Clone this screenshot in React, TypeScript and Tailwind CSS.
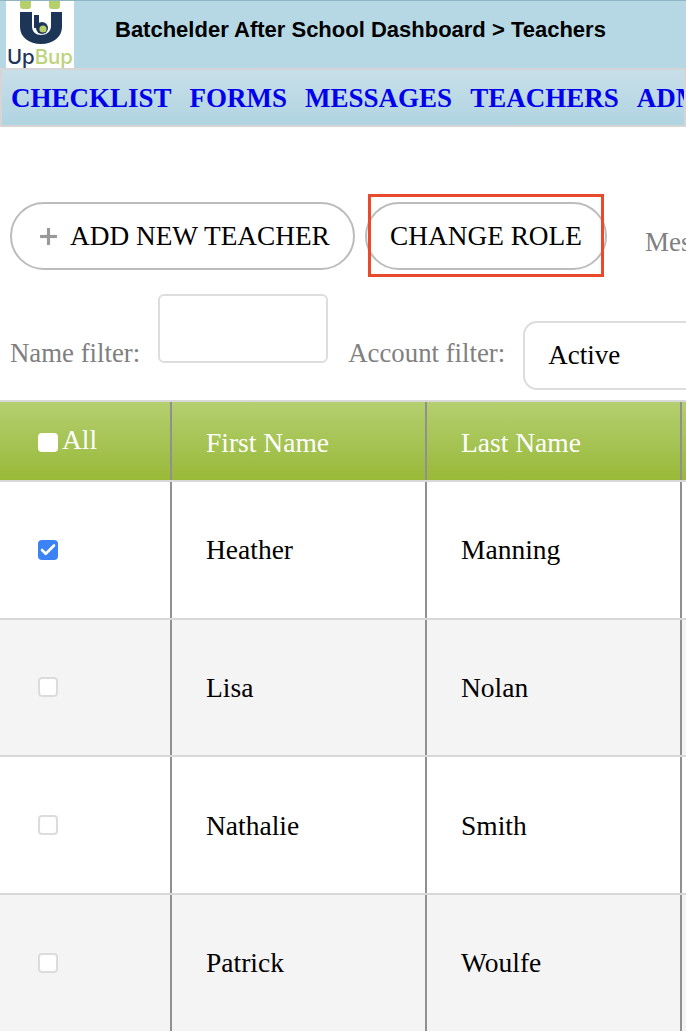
import { Check, Plus } from "lucide-react";

const NAV_ITEMS = ["CHECKLIST", "FORMS", "MESSAGES", "TEACHERS", "ADMIN"];

const TEACHERS = [
  { first: "Heather", last: "Manning", checked: true },
  { first: "Lisa", last: "Nolan", checked: false },
  { first: "Nathalie", last: "Smith", checked: false },
  { first: "Patrick", last: "Woulfe", checked: false },
];

function Logo() {
  return (
    <svg width="68" height="67" viewBox="0 0 68 67" className="block shrink-0 bg-white">
      <path d="M14 0h11v5q0 3-3 3h-5q-3 0-3-3z" fill="#b5cf6b" />
      <path d="M43 0h11v5q0 3-3 3h-5q-3 0-3-3z" fill="#b5cf6b" />
      <path d="M14 11h12v14c0 6 4 9 9 9s10-3 10-9V11h11v15c0 10-9 17-21 17S14 36 14 26z" fill="#1d3557" />
      <rect x="28" y="14" width="5" height="13" fill="#1d3557" />
      <circle cx="36" cy="27" r="6" fill="#1d3557" />
      <circle cx="37" cy="28" r="3.6" fill="#b5cf6b" />
      <text x="1" y="63" fontFamily="Inter, sans-serif" fontSize="20" fontWeight="500" textLength="66" lengthAdjust="spacingAndGlyphs">
        <tspan fill="#1f3559">Up</tspan>
        <tspan fill="#bcd37a">Bup</tspan>
      </text>
    </svg>
  );
}

function PillButton({ children }: { children: React.ReactNode }) {
  return (
    <button className="h-[68px] shrink-0 rounded-[34px] border-2 border-[#bcbcbc] bg-white text-[27.3px] text-black">
      {children}
    </button>
  );
}

function RowCheckbox({ checked }: { checked: boolean }) {
  if (checked) {
    return (
      <span className="flex h-[20px] w-[20px] items-center justify-center rounded-[4px] bg-[#3b82f6]">
        <Check size={18} strokeWidth={3.5} className="text-white" />
      </span>
    );
  }
  return <span className="block h-[20px] w-[20px] rounded-[4px] border-2 border-[#dcdcdc] bg-white" />;
}

export default function App() {
  return (
    <div className="h-[1036px] w-[686px] overflow-hidden bg-white font-['Liberation_Serif',serif]">
      <header className="flex h-[68px] border-t border-[#8fb4c4] bg-[#b5d8e4] pl-[6px]">
        <Logo />
        <h1 className="ml-[41px] mt-[16px] whitespace-nowrap font-['Liberation_Sans',sans-serif] text-[22px] font-bold leading-[26px] text-black">
          Batchelder After School Dashboard &gt; Teachers
        </h1>
      </header>

      <nav className="flex h-[59px] items-center gap-[18px] overflow-hidden whitespace-nowrap border-2 border-[#d5d5d5] bg-gradient-to-b from-[#c8dfe9] to-[#b0d4e1] pl-[9px] pt-[2px]">
        {NAV_ITEMS.map((item) => (
          <a key={item} className="text-[27px] font-bold text-[#0000ee]">
            {item}
          </a>
        ))}
      </nav>

      <div className="relative ml-[10px] mt-[75px] flex items-center whitespace-nowrap">
        <PillButton>
          <span className="flex w-[341px] items-center pl-[22px]">
            <Plus size={29} strokeWidth={2.6} strokeLinecap="butt" className="mr-[7px] text-[#999]" />
            ADD NEW TEACHER
          </span>
        </PillButton>
        <div className="ml-[10px]">
          <PillButton>
            <span className="block w-[238px] text-center">CHANGE ROLE</span>
          </PillButton>
        </div>
        <span className="ml-[38px] mt-[12px] text-[27px] text-[#808080]">Message</span>
        {/* annotation box sitting over the button */}
        <div className="absolute left-[358px] top-[-8px] h-[83px] w-[236px] border-[3px] border-[#ea4a2c]" />
      </div>

      <div className="ml-[10px] mt-[24px] flex h-[96px] whitespace-nowrap text-[26.8px] text-[#808080]">
        <span className="mt-[39px]">Name filter:</span>
        <span className="ml-[18px] block h-[69px] w-[170px] shrink-0 rounded-[6px] border-2 border-[#dddddd] bg-white" />
        <span className="ml-[20px] mt-[39px]">Account filter:</span>
        <div className="ml-[18px] mt-[27px] h-[69px] w-[260px] shrink-0 rounded-[14px] border-2 border-[#dddddd] bg-white pl-[23px] text-[27px] leading-[65px] text-black">
          Active
        </div>
      </div>

      <div className="mt-[10px] h-[631px] w-[760px] overflow-hidden">
        <div className="grid h-[82px] grid-cols-[172px_255px_255px_78px] border-y-2 border-[#d8d8d8] bg-gradient-to-b from-[#b4cf6e] to-[#99b937] text-[27.5px] text-white">
          <div className="flex items-start border-r-2 border-[#909090] pl-[38px]">
            <span className="mt-[31px] block h-[19px] w-[20px] rounded-[4px] bg-white" />
            <span className="ml-[4px] mt-[17px]">All</span>
          </div>
          <div className="flex items-center border-r-2 border-[#909090] pl-[34px] pt-[3px]">First Name</div>
          <div className="flex items-center border-r-2 border-[#909090] pl-[34px] pt-[3px]">Last Name</div>
          <div />
        </div>

        {TEACHERS.map((teacher, i) => (
          <div
            key={teacher.first}
            className={`grid h-[137.67px] grid-cols-[172px_255px_255px_78px] border-b-2 border-[#d8d8d8] text-[27.5px] text-black ${
              i % 2 === 1 ? "bg-[#f4f4f4]" : "bg-white"
            }`}
          >
            <div className="flex items-center border-r-2 border-[#909090] pl-[38px]">
              <RowCheckbox checked={teacher.checked} />
            </div>
            <div className="flex items-center border-r-2 border-[#909090] pl-[34px]">{teacher.first}</div>
            <div className="flex items-center border-r-2 border-[#909090] pl-[34px]">{teacher.last}</div>
            <div />
          </div>
        ))}
      </div>
    </div>
  );
}
